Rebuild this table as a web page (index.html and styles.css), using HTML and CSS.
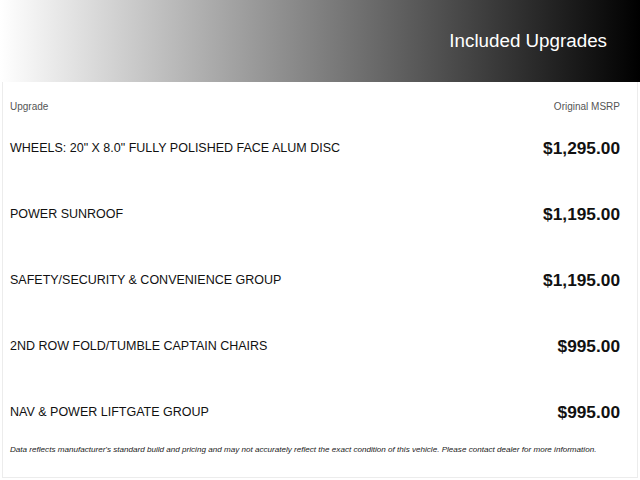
FILE: index.html
```html
<!DOCTYPE html>
<html>
<head>
<meta charset="utf-8">
<link rel="stylesheet" href="styles.css">
</head>
<body>
<div class="page">
  <header class="banner">
    <h1 class="title">Included Upgrades</h1>
  </header>
  <section class="panel">
    <div class="head-row">
      <span>Upgrade</span>
      <span>Original MSRP</span>
    </div>
    <div class="row"><span class="name">WHEELS: 20" X 8.0" FULLY POLISHED FACE ALUM DISC</span><span class="price">$1,295.00</span></div>
    <div class="row"><span class="name">POWER SUNROOF</span><span class="price">$1,195.00</span></div>
    <div class="row"><span class="name">SAFETY/SECURITY &amp; CONVENIENCE GROUP</span><span class="price">$1,195.00</span></div>
    <div class="row"><span class="name">2ND ROW FOLD/TUMBLE CAPTAIN CHAIRS</span><span class="price">$995.00</span></div>
    <div class="row"><span class="name">NAV &amp; POWER LIFTGATE GROUP</span><span class="price">$995.00</span></div>
    <p class="note">Data reflects manufacturer's standard build and pricing and may not accurately reflect the exact condition of this vehicle. Please contact dealer for more information.</p>
  </section>
</div>
</body>
</html>
```
FILE: styles.css
```css
html, body {
  margin: 0;
  padding: 0;
  background: #fff;
}
body {
  font-family: "Liberation Sans", Arial, sans-serif;
  color: #111;
}
.page {
  width: 640px;
  height: 480px;
  overflow: hidden;
}
.banner {
  height: 82px;
  background: linear-gradient(to right, #ffffff 0%, #000000 100%);
  display: flex;
  align-items: center;
  justify-content: flex-end;
  padding-right: 33px;
  box-sizing: border-box;
}
.title {
  margin: 0;
  font-weight: normal;
  font-size: 18.8px;
  color: #fff;
}
.panel {
  margin: 0 2px;
  height: 396px;
  border: 1px solid #ececec;
  border-top: none;
  box-sizing: border-box;
  padding: 0 17px 0 7px;
  display: flex;
  flex-direction: column;
}
.head-row {
  display: flex;
  justify-content: space-between;
  font-size: 10px;
  color: #555;
  padding-top: 19px;
  height: 33px;
  box-sizing: border-box;
}
.row {
  display: flex;
  justify-content: space-between;
  align-items: center;
  height: 66px;
}
.name {
  font-size: 12.5px;
  color: #111;
}
.price {
  font-size: 17.3px;
  font-weight: bold;
  color: #111;
}
.note {
  margin: 0;
  font-size: 8.1px;
  font-style: italic;
  color: #222;
}
```
